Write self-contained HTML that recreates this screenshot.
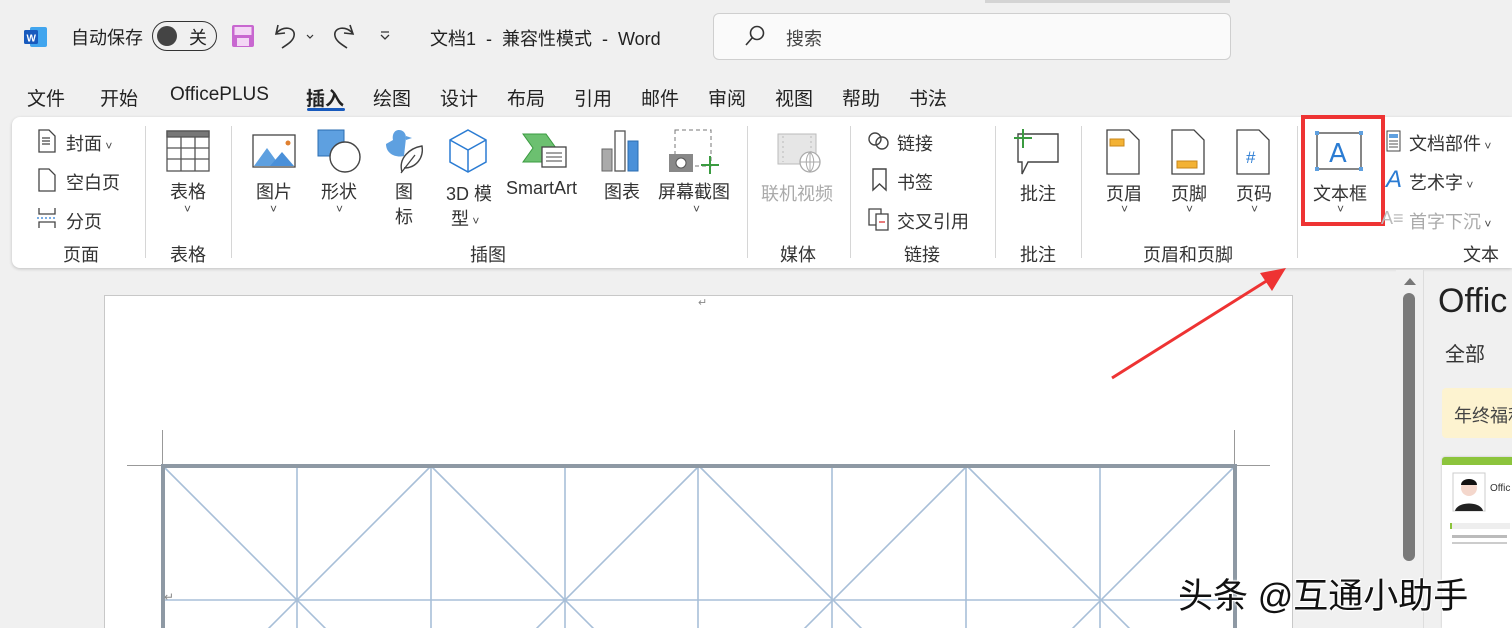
<!DOCTYPE html>
<html><head><meta charset="utf-8"><style>
*{margin:0;padding:0;box-sizing:border-box}
body{width:1512px;height:628px;overflow:hidden;background:#f0f0f0;font-family:"Liberation Sans","Noto Sans CJK SC",sans-serif;color:#222;position:relative}
.a{position:absolute;white-space:nowrap}
.t{font-size:19px}
.g{font-size:18px;color:#333}
.sep{position:absolute;top:126px;width:1px;height:132px;background:#d6d6d6}
.ch{font-size:12px;color:#444}
</style></head><body>
<div class="a" style="left:985px;top:0;width:245px;height:3px;background:#d4d4d4"></div>
<svg class="a" style="left:24px;top:26px" width="24" height="22"><rect x="6" y="1" width="17" height="20" rx="2" fill="#41a5ee"/><rect x="0" y="4" width="14" height="14" rx="1.5" fill="#185abd"/><text x="2.5" y="15.5" font-size="10" font-weight="bold" fill="#fff" font-family="Liberation Sans">W</text></svg>
<div class="a t" style="left:71px;top:24px;font-size:18px">自动保存</div>
<div class="a" style="left:152px;top:21px;width:65px;height:30px;border:1.5px solid #333;border-radius:15px"></div>
<div class="a" style="left:157px;top:26px;width:20px;height:20px;border-radius:50%;background:#444"></div>
<div class="a" style="left:189px;top:24px;font-size:18px">关</div>
<svg class="a" style="left:231px;top:24px" width="24" height="24"><rect x="1" y="1" width="22" height="22" rx="2" fill="#c867d0"/><rect x="3.5" y="3" width="17" height="8" fill="#f3d7f5"/><rect x="6" y="14" width="12" height="8" fill="#f3d7f5"/></svg>
<svg class="a" style="left:272px;top:22px" width="50" height="28" fill="none" stroke="#333" stroke-width="1.6"><path d="M6 3 L4 12 L13 11"/><path d="M4 12 C10 3 24 5 22 14 C21 19 16 22 10 26"/><path d="M35 13 l3 3 3-3" stroke-width="1.2"/></svg>
<svg class="a" style="left:330px;top:22px" width="28" height="28" fill="none" stroke="#333" stroke-width="1.6"><path d="M20 3 L23 12 L14 11"/><path d="M23 12 C17 3 3 5 5 14 C6 19 11 22 17 26"/></svg>
<svg class="a" style="left:378px;top:30px" width="14" height="12" stroke="#333" fill="none" stroke-width="1.3"><path d="M3 2h8M3 5l4 4 4-4"/></svg>
<div class="a t" style="left:430px;top:25px;font-size:18px">文档1 &nbsp;-&nbsp; 兼容性模式 &nbsp;-&nbsp; Word</div>
<div class="a" style="left:713px;top:13px;width:518px;height:47px;background:#fafafa;border:1px solid #cfcfcf;border-radius:6px"></div>
<svg class="a" style="left:743px;top:24px" width="24" height="24" fill="none" stroke="#333" stroke-width="1.6"><circle cx="14" cy="9" r="6.5"/><path d="M9.5 13.5 L3 21"/></svg>
<div class="a" style="left:786px;top:25px;font-size:18px;color:#444">搜索</div>
<div class="a t" style="left:27px;top:84px">文件</div>
<div class="a t" style="left:100px;top:84px">开始</div>
<div class="a t" style="left:170px;top:84px">OfficePLUS</div>
<div class="a t" style="left:306px;top:84px;font-weight:bold">插入</div>
<div class="a" style="left:307px;top:108px;width:38px;height:3px;background:#185abd;border-radius:2px"></div>
<div class="a t" style="left:373px;top:84px">绘图</div>
<div class="a t" style="left:440px;top:84px">设计</div>
<div class="a t" style="left:507px;top:84px">布局</div>
<div class="a t" style="left:574px;top:84px">引用</div>
<div class="a t" style="left:641px;top:84px">邮件</div>
<div class="a t" style="left:708px;top:84px">审阅</div>
<div class="a t" style="left:775px;top:84px">视图</div>
<div class="a t" style="left:842px;top:84px">帮助</div>
<div class="a t" style="left:909px;top:84px">书法</div>
<div class="a" style="left:12px;top:117px;width:1500px;height:151px;background:#fff;border-radius:8px 0 0 8px;box-shadow:0 1px 3px rgba(0,0,0,.2)"></div>
<div class="sep" style="left:145px"></div><div class="sep" style="left:231px"></div><div class="sep" style="left:747px"></div><div class="sep" style="left:850px"></div><div class="sep" style="left:995px"></div><div class="sep" style="left:1081px"></div><div class="sep" style="left:1297px"></div>
<svg class="a" style="left:37px;top:129px" width="20" height="24" fill="none" stroke="#444" stroke-width="1.3"><path d="M2 1h10l6 6v16H2z"/><path d="M5 9h8M5 12h8M5 15h8"/></svg>
<div class="a g" style="left:66px;top:130px">封面<span class="ch"> ˅</span></div>
<svg class="a" style="left:37px;top:168px" width="20" height="24" fill="none" stroke="#444" stroke-width="1.3"><path d="M2 1h10l6 6v16H2z"/></svg>
<div class="a g" style="left:66px;top:169px">空白页</div>
<svg class="a" style="left:36px;top:207px" width="22" height="22" fill="none" stroke="#444" stroke-width="1.3"><path d="M3 1v6h16V1M3 21v-6h16v6"/><path d="M1 11h20" stroke="#2b7cd3" stroke-dasharray="2 2"/></svg>
<div class="a g" style="left:66px;top:208px">分页</div>
<div class="a g" style="left:63px;top:241px">页面</div>
<svg class="a" style="left:166px;top:130px" width="44" height="42" fill="none" stroke="#555" stroke-width="1.3"><rect x="1" y="1" width="42" height="40"/><rect x="1" y="1" width="42" height="6" fill="#777"/><path d="M15 7v34M29 7v34M1 18h42M1 29h42"/></svg>
<div class="a g" style="left:170px;top:178px">表格</div><div class="a ch" style="left:184px;top:202px">˅</div>
<div class="a g" style="left:170px;top:241px">表格</div>
<svg class="a" style="left:252px;top:134px" width="44" height="34"><rect x="1" y="1" width="42" height="32" fill="#fff" stroke="#444" stroke-width="1.3"/><path d="M2 32 L15 14 L28 32Z" fill="#5ea0e0"/><path d="M18 32 L30 18 L42 32Z" fill="#4a90d9"/><circle cx="36" cy="9" r="2.5" fill="#e08030"/></svg>
<div class="a g" style="left:256px;top:178px">图片</div><div class="a ch" style="left:270px;top:202px">˅</div>
<svg class="a" style="left:317px;top:129px" width="46" height="46"><rect x="1" y="1" width="26" height="26" fill="#5ea0e0" stroke="#2b6cb0"/><circle cx="28" cy="28" r="15" fill="#fff" stroke="#444" stroke-width="1.4"/></svg>
<div class="a g" style="left:321px;top:178px">形状</div><div class="a ch" style="left:336px;top:202px">˅</div>
<svg class="a" style="left:382px;top:128px" width="46" height="46"><path d="M4 16 C4 26 14 30 22 28 L24 10 C24 4 20 2 17 2 C12 2 10 7 11 12 Z" fill="#5ea0e0"/><path d="M24 12 L30 10 L24 8z" fill="#5ea0e0"/><path d="M20 44 C16 30 28 20 40 18 C42 30 34 40 22 40" fill="#fff" stroke="#444" stroke-width="1.4"/><path d="M19 45 L33 27" stroke="#444" stroke-width="1.3"/></svg>
<div class="a g" style="left:395px;top:178px">图</div><div class="a g" style="left:395px;top:203px">标</div>
<svg class="a" style="left:447px;top:128px" width="42" height="46" fill="none" stroke="#2b7cd3" stroke-width="1.5"><path d="M21 2 L39 12 V34 L21 44 L3 34 V12 Z"/><path d="M3 12 L21 22 L39 12 M21 22 V44"/></svg>
<div class="a g" style="left:446px;top:180px">3D 模</div><div class="a g" style="left:451px;top:205px">型<span class="ch"> ˅</span></div>
<svg class="a" style="left:522px;top:132px" width="46" height="38"><path d="M1 2 H24 L34 16 L24 30 H1 L11 16Z" fill="#6cc070" stroke="#3a9b40"/><rect x="20" y="15" width="24" height="20" fill="#fff" stroke="#444" stroke-width="1.3"/><path d="M24 21h16M24 25h16M24 29h16" stroke="#444"/></svg>
<div class="a g" style="left:506px;top:178px">SmartArt</div>
<svg class="a" style="left:600px;top:129px" width="44" height="44"><rect x="2" y="20" width="10" height="22" fill="#aaa" stroke="#666"/><rect x="15" y="2" width="10" height="40" fill="#fff" stroke="#555" stroke-width="1.3"/><rect x="28" y="12" width="10" height="30" fill="#4a90d9" stroke="#2b6cb0"/></svg>
<div class="a g" style="left:604px;top:178px">图表</div>
<svg class="a" style="left:668px;top:128px" width="54" height="50"><rect x="7" y="2" width="36" height="36" fill="none" stroke="#777" stroke-dasharray="4 3"/><rect x="1" y="26" width="24" height="18" fill="#888"/><circle cx="13" cy="35" r="5" fill="#fff" stroke="#555"/><path d="M42 28 V46 M33 37 H51" stroke="#3a9b40" stroke-width="2"/></svg>
<div class="a g" style="left:658px;top:178px">屏幕截图</div><div class="a ch" style="left:693px;top:202px">˅</div>
<div class="a g" style="left:470px;top:241px">插图</div>
<svg class="a" style="left:776px;top:132px" width="48" height="42"><rect x="2" y="2" width="38" height="30" fill="#e6e6e6" stroke="#bbb"/><path d="M7 4v26M35 4v26" stroke="#bbb" stroke-dasharray="2 3"/><circle cx="34" cy="30" r="10" fill="#fff" stroke="#aaa" stroke-width="1.3"/><path d="M24 30h20M34 20v20M34 20c-5 5-5 15 0 20M34 20c5 5 5 15 0 20" fill="none" stroke="#aaa"/></svg>
<div class="a g" style="left:761px;top:180px;color:#aaa">联机视频</div>
<div class="a g" style="left:780px;top:241px">媒体</div>
<svg class="a" style="left:867px;top:131px" width="24" height="20" fill="none" stroke="#444" stroke-width="1.4"><circle cx="8" cy="8" r="6"/><circle cx="15" cy="12" r="6"/></svg>
<div class="a g" style="left:897px;top:130px">链接</div>
<svg class="a" style="left:871px;top:168px" width="18" height="24" fill="none" stroke="#444" stroke-width="1.4"><path d="M2 1h13v21l-6.5-6L2 22z"/></svg>
<div class="a g" style="left:897px;top:169px">书签</div>
<svg class="a" style="left:867px;top:207px" width="26" height="24" fill="none" stroke="#444" stroke-width="1.3"><path d="M2 2h12v16H2z"/><rect x="9" y="7" width="12" height="16" fill="#fff"/><path d="M12 15h6" stroke="#d33"/></svg>
<div class="a g" style="left:897px;top:208px">交叉引用</div>
<div class="a g" style="left:904px;top:241px">链接</div>
<svg class="a" style="left:1012px;top:128px" width="50" height="50" fill="none"><path d="M6 6 H46 V34 H16 L10 46 V34 H6 Z" fill="#fff" stroke="#444" stroke-width="1.4"/><path d="M11 1 V20 M2 10 H20" stroke="#3a9b40" stroke-width="2"/></svg>
<div class="a g" style="left:1020px;top:180px">批注</div>
<div class="a g" style="left:1020px;top:241px">批注</div>
<svg class="a" style="left:1105px;top:129px" width="36" height="46"><path d="M2 1h22l10 10v34H2z" fill="#fff" stroke="#444" stroke-width="1.3"/><rect x="5" y="10" width="14" height="7" fill="#f3b234" stroke="#c8871a"/></svg>
<div class="a g" style="left:1106px;top:180px">页眉</div><div class="a ch" style="left:1121px;top:202px">˅</div>
<svg class="a" style="left:1170px;top:129px" width="36" height="46"><path d="M2 1h22l10 10v34H2z" fill="#fff" stroke="#444" stroke-width="1.3"/><rect x="7" y="32" width="20" height="7" fill="#f3b234" stroke="#c8871a"/></svg>
<div class="a g" style="left:1171px;top:180px">页脚</div><div class="a ch" style="left:1186px;top:202px">˅</div>
<svg class="a" style="left:1235px;top:129px" width="36" height="46"><path d="M2 1h22l10 10v34H2z" fill="#fff" stroke="#444" stroke-width="1.3"/><text x="11" y="34" font-size="17" fill="#2b7cd3" font-family="Liberation Sans">#</text></svg>
<div class="a g" style="left:1236px;top:180px">页码</div><div class="a ch" style="left:1251px;top:202px">˅</div>
<div class="a g" style="left:1143px;top:241px">页眉和页脚</div>
<svg class="a" style="left:1314px;top:130px" width="52" height="44"><rect x="3" y="3" width="44" height="36" fill="#fff" stroke="#444" stroke-width="1.3"/><rect x="1" y="1" width="4" height="4" fill="#5ea0e0"/><rect x="45" y="1" width="4" height="4" fill="#5ea0e0"/><rect x="1" y="37" width="4" height="4" fill="#5ea0e0"/><rect x="45" y="37" width="4" height="4" fill="#5ea0e0"/><text x="15" y="32" font-size="26" fill="#2b7cd3" font-family="DejaVu Sans">A</text></svg>
<div class="a g" style="left:1313px;top:180px">文本框</div><div class="a ch" style="left:1337px;top:202px">˅</div>
<div class="a" style="left:1301px;top:115px;width:84px;height:111px;border:4px solid #e33"></div>
<svg class="a" style="left:1386px;top:130px" width="16" height="22"><rect x="1" y="1" width="13" height="20" fill="#fff" stroke="#444"/><rect x="3" y="4" width="9" height="4" fill="#5ea0e0"/><path d="M3 11h9M3 14h9M3 17h9" stroke="#555"/></svg>
<div class="a g" style="left:1409px;top:130px">文档部件<span class="ch"> ˅</span></div>
<div class="a" style="left:1386px;top:166px;font-size:24px;color:#2b7cd3;font-style:italic">A</div>
<div class="a g" style="left:1409px;top:169px">艺术字<span class="ch"> ˅</span></div>
<div class="a" style="left:1381px;top:208px;font-size:18px;color:#bbb">A≡</div>
<div class="a g" style="left:1409px;top:208px;color:#aaa">首字下沉<span class="ch"> ˅</span></div>
<div class="a g" style="left:1463px;top:241px">文本</div>
<div class="a" style="left:104px;top:295px;width:1189px;height:333px;background:#fff;border:1px solid #c8c8c8;border-bottom:none"></div>
<div class="a" style="left:698px;top:296px;font-size:11px;color:#888">↵</div>
<div class="a" style="left:162px;top:430px;width:1px;height:36px;background:#999"></div>
<div class="a" style="left:1234px;top:430px;width:1px;height:36px;background:#999"></div>
<div class="a" style="left:127px;top:465px;width:36px;height:1px;background:#999"></div>
<div class="a" style="left:1234px;top:465px;width:36px;height:1px;background:#999"></div>
<svg class="a" style="left:160px;top:463px" width="1080" height="165">
<g stroke="#a8bfd8" stroke-width="1.6" fill="none">
<path d="M137 3V170M271 3V170M405 3V170M538 3V170M672 3V170M806 3V170M940 3V170"/>
<path d="M3 137H1074"/>
<path d="M3 3L271 271M271 3L3 271M271 3L539 271M539 3L271 271M539 3L807 271M807 3L539 271M807 3L1075 271M1075 3L807 271"/>
</g>
<path d="M3 170V3H1075V170" stroke="#8e99a4" stroke-width="4" fill="none"/>
</svg>
<div class="a" style="left:164px;top:590px;font-size:12px;color:#888">↵</div>
<div class="a" style="left:1396px;top:270px;width:28px;height:358px;background:#f0f0f0"></div>
<svg class="a" style="left:1403px;top:276px" width="14" height="10"><path d="M1 9L7 2L13 9Z" fill="#777"/></svg>
<div class="a" style="left:1403px;top:293px;width:12px;height:268px;background:#7a7a7a;border-radius:6px"></div>
<div class="a" style="left:1423px;top:270px;width:1px;height:358px;background:#ddd"></div>
<div class="a" style="left:1438px;top:282px;font-size:34px;color:#222">Offic</div>
<div class="a" style="left:1445px;top:338px;font-size:20px;color:#333">全部</div>
<div class="a" style="left:1442px;top:388px;width:70px;height:50px;background:#fdf3d0;border-radius:4px 0 0 4px;overflow:hidden"><div style="position:absolute;left:12px;top:14px;font-size:18px;color:#444">年终福利</div></div>
<div class="a" style="left:1442px;top:457px;width:70px;height:171px;background:#fff;border-top:8px solid #8cc43c;border-radius:3px 0 0 0;box-shadow:0 0 2px rgba(0,0,0,.2)"></div>
<svg class="a" style="left:1452px;top:472px" width="34" height="40"><rect x="1" y="1" width="32" height="38" fill="#fff" stroke="#ccc"/><circle cx="17" cy="16" r="8" fill="#f4d7cc"/><path d="M9 13c0-8 16-8 16 0" fill="#111"/><path d="M3 39c2-10 26-10 28 0z" fill="#222"/></svg>
<div class="a" style="left:1490px;top:483px;font-size:10px;color:#333">Offic</div>
<div class="a" style="left:1450px;top:523px;width:60px;height:6px;background:#eee;border-left:2px solid #8cc43c"></div>
<div class="a" style="left:1452px;top:535px;width:55px;height:3px;background:#bbb"></div>
<div class="a" style="left:1452px;top:542px;width:55px;height:2px;background:#ccc"></div>
<div class="a" style="left:1178px;top:568px;font-size:35px;color:#111;text-shadow:0 0 2px #fff,0 0 3px #fff,1px 1px 0 #fff,-1px -1px 0 #fff">头条 @互通小助手</div>
<svg class="a" style="left:1100px;top:255px" width="200" height="130"><path d="M12 123 L176 20" stroke="#e33" stroke-width="3"/><path d="M186 13 L160 18 L172 36 Z" fill="#e33"/></svg>
</body></html>
